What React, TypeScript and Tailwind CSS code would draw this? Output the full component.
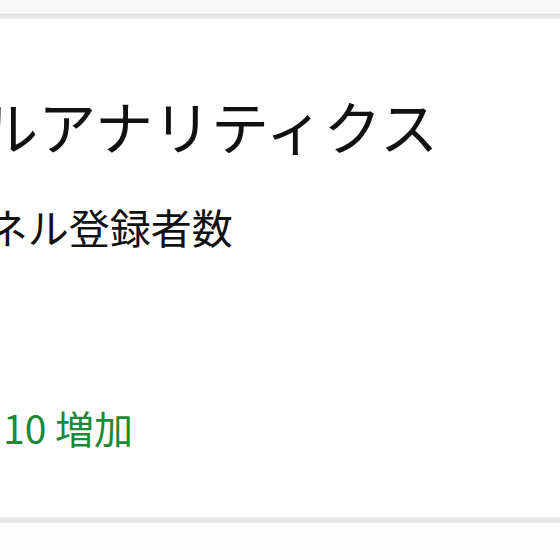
import React from "react";

export default function App() {
  const jp = { fontFamily: '"Noto Sans CJK JP", "Noto Sans", sans-serif' };
  return (
    <div className="w-[560px] h-[560px] overflow-hidden bg-[#fdfdfd] flex flex-col" style={jp}>
      <div className="h-[12px] bg-[#f8f8f8]" />
      <div className="h-px bg-white" />
      <div className="h-[6px] bg-gradient-to-b from-[#ececec] via-[#dfdfdf] to-[#efefef]" />
      <div className="h-[498px] bg-white flex flex-col overflow-hidden">
        <div className="pt-[77px] text-[58px] leading-none text-[#111] whitespace-nowrap -ml-[250px]">
          チャンネルアナリティクス
        </div>
        <div className="mt-[52px] text-[41px] leading-none text-[#111] whitespace-nowrap -ml-[135px]">
          チャンネル登録者数
        </div>
        <div className="mt-[161px] text-[39px] leading-none text-[#1a8a38] whitespace-nowrap ml-[3px]">
          10 増加
        </div>
      </div>
      <div className="h-[6px] bg-gradient-to-b from-[#f0f0f0] via-[#e2e2e2] to-[#f0f0f0]" />
      <div className="flex-1 bg-[#fdfdfd]" />
    </div>
  );
}
